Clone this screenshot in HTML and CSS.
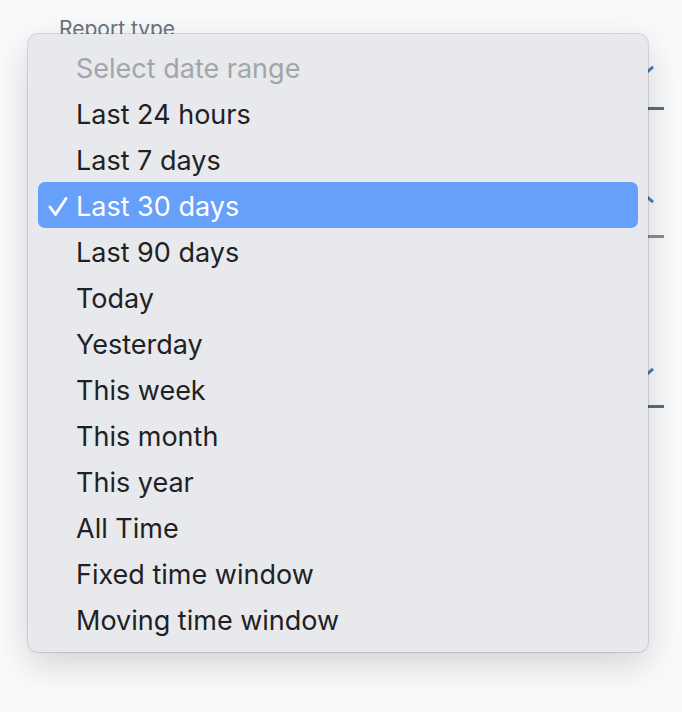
FILE: index.html
```html
<!DOCTYPE html>
<html>
<head>
<meta charset="utf-8">
<link rel="stylesheet" href="styles.css">
</head>
<body>
<div class="form">
  <div class="label">Report type</div>
  <div class="field f1"><span class="chev"></span></div>
  <div class="field f2"><span class="chev up"></span></div>
  <div class="field f3"><span class="chev"></span></div>
</div>
<div class="menu">
  <div class="item placeholder">Select date range</div>
  <div class="item">Last 24 hours</div>
  <div class="item">Last 7 days</div>
  <div class="item selected"><svg class="check" width="20" height="20" viewBox="0 0 20 20"><path d="M2 10 L7.5 17.5 L18 1.5" fill="none" stroke="#fff" stroke-width="2.8" stroke-linecap="round" stroke-linejoin="round"/></svg>Last 30 days</div>
  <div class="item">Last 90 days</div>
  <div class="item">Today</div>
  <div class="item">Yesterday</div>
  <div class="item">This week</div>
  <div class="item">This month</div>
  <div class="item">This year</div>
  <div class="item">All Time</div>
  <div class="item">Fixed time window</div>
  <div class="item">Moving time window</div>
</div>
</body>
</html>
```
FILE: styles.css
```css
html, body { margin: 0; padding: 0; }
body {
  background: #f9fafb;
  width: 682px;
  height: 712px;
  overflow: hidden;
  position: relative;
  font-family: Inter, "Noto Sans", sans-serif;
}
.form {
  padding: 16px 18px 0 59px;
  display: flex;
  flex-direction: column;
}
.label {
  font-size: 21px;
  color: #6b7280;
  line-height: 26px;
}
.field {
  position: relative;
  border-bottom: 3px solid #5f6b7a;
}
.f1 { height: 65px; }
.f2 { height: 125px; border-bottom-color: #8a8d91; }
.f3 { height: 167px; }
.chev {
  position: absolute;
  right: 10px;
  width: 8px;
  height: 3px;
  background: #4a7fb0;
  transform: rotate(-40deg);
  top: 26px;
}
.f2 .chev { top: 88px; transform: rotate(40deg); }
.f3 .chev { top: 132px; }
.menu {
  position: absolute;
  left: 28px;
  top: 34px;
  width: 620px;
  height: 618px;
  box-sizing: border-box;
  padding: 10px 10px 10px 10px;
  background: #e7e9ec;
  border-radius: 10px;
  box-shadow: 0 0 0 1px rgba(0,0,0,0.12), 0 12px 36px rgba(0,0,0,0.16);
  display: flex;
  flex-direction: column;
}
.item {
  box-sizing: border-box;
  height: 46px;
  padding-top: 3px;
  line-height: 43px;
  padding-left: 38px;
  font-size: 27px;
  color: #1f2124;
  position: relative;
  white-space: nowrap;
}
.placeholder { color: #a2a5a9; }
.selected {
  background: #67a0fb;
  color: #fff;
  border-radius: 7px;
}
.check {
  position: absolute;
  left: 10px;
  top: 15px;
}
```
